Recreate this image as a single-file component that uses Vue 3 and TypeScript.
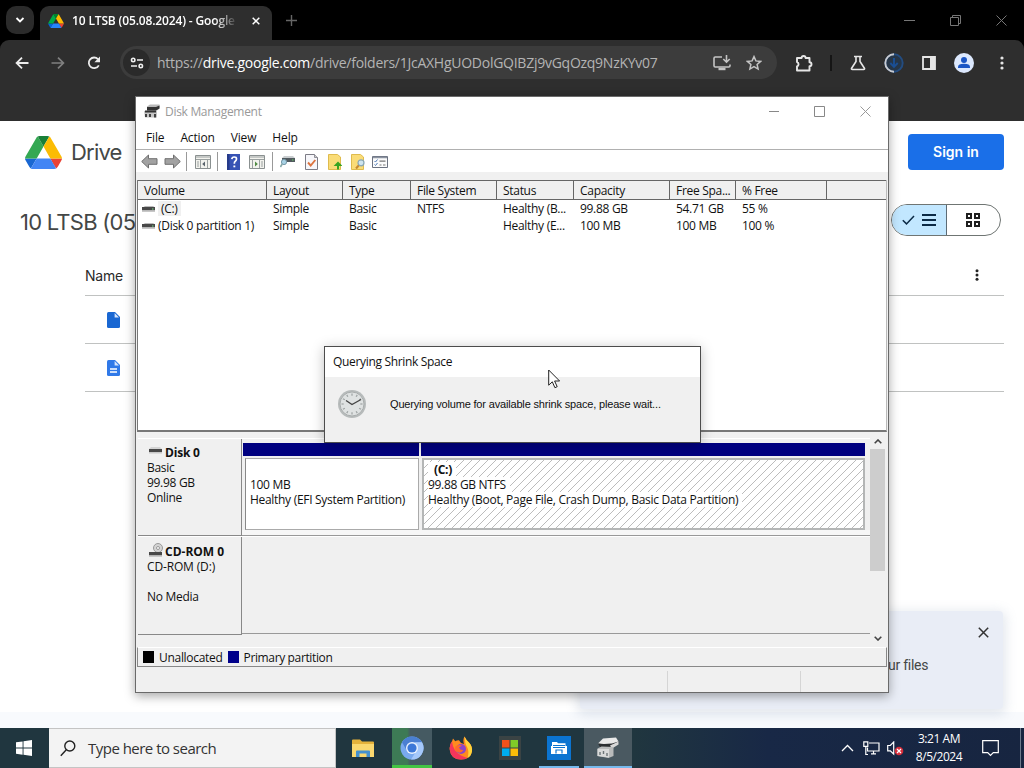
<script setup lang="ts">
interface Volume {
  name: string
  layout: string
  type: string
  fs: string
  status: string
  capacity: string
  free: string
  pct: string
}

const columns: string[] = ['Volume', 'Layout', 'Type', 'File System', 'Status', 'Capacity', 'Free Spa...', '% Free', '']

const volumes: Volume[] = [
  { name: '(C:)', layout: 'Simple', type: 'Basic', fs: 'NTFS', status: 'Healthy (B...', capacity: '99.88 GB', free: '54.71 GB', pct: '55 %' },
  { name: '(Disk 0 partition 1)', layout: 'Simple', type: 'Basic', fs: '', status: 'Healthy (E...', capacity: '100 MB', free: '100 MB', pct: '100 %' },
]

const menus: string[] = ['File', 'Action', 'View', 'Help']
const ticks: number[] = [0, 30, 60, 90, 120, 150, 180, 210, 240, 270, 300, 330]
</script>

<template>
  <div class="desktop">
    <div class="browser">
      <div class="tabstrip">
        <div class="tabsearch">
          <svg width="10" height="6" viewBox="0 0 10 6"><path d="M1.5 1l3.5 3.5L8.500 1" fill="none" stroke="#fff" stroke-width="1.8" /></svg>
        </div>
        <div class="tab">
          <svg class="fav" width="16" height="14" viewBox="0 0 87.3 78">
            <path d="M6.600 66.850l3.850 6.650c.8 1.400 1.950 2.500 3.300 3.300l13.750-23.800H0c0 1.550.4 3.100 1.200 4.500z" fill="#0066da" />
            <path d="M43.650 25L29.900 1.200c-1.350.8-2.500 1.900-3.300 3.300l-25.400 44A9 9 0 0 0 0 53h27.500z" fill="#00ac47" />
            <path d="M73.550 76.800c1.350-.8 2.500-1.900 3.300-3.300l1.600-2.750L86.100 57.500c.8-1.400 1.200-2.950 1.200-4.500H59.800l5.850 11.500z" fill="#ea4335" />
            <path d="M43.650 25L57.400 1.200C56.050.4 54.500 0 52.900 0H34.400c-1.600 0-3.150.45-4.500 1.200z" fill="#00832d" />
            <path d="M59.800 53H27.500L13.750 76.800c1.350.8 2.900 1.200 4.500 1.200h50.800c1.600 0 3.150-.45 4.500-1.200z" fill="#2684fc" />
            <path d="M73.400 26.500L60.700 4.500c-.8-1.400-1.950-2.500-3.300-3.300L43.650 25 59.800 53h27.450c0-1.550-.4-3.100-1.200-4.500z" fill="#ffba00" />
          </svg>
          <span class="tabtitle">10 LTSB (05.08.2024) - Google</span>
          <svg class="tabx" width="8" height="8" viewBox="0 0 8 8"><path d="M.7.7l6.600 6.600M7.300.7L.7 7.300" stroke="#fff" stroke-width="1.500" /></svg>
        </div>
        <svg class="newtab" width="11" height="11" viewBox="0 0 11 11"><path d="M5.500 0v11M0 5.500h11" stroke="#666" stroke-width="1.400" /></svg>
        <div class="winbtns">
          <svg width="11" height="11" viewBox="0 0 11 11"><path d="M0 5.500h11" stroke="#777" /></svg>
          <svg width="11" height="11" viewBox="0 0 11 11"><path d="M.5 2.500h8v8h-8zM2.500 2.500v-2h8v8h-2" fill="none" stroke="#777" /></svg>
          <svg width="11" height="11" viewBox="0 0 11 11"><path d="M.5.5l10 10M10.500.5l-10 10" stroke="#777" /></svg>
        </div>
      </div>

      <div class="toolbar">
        <svg class="back" width="14" height="12" viewBox="0 0 14 12"><path d="M13.500 6H1.500M7 .7L1.600 6 7 11.300" fill="none" stroke="#ececec" stroke-width="1.800" /></svg>
        <svg class="fwd" width="14" height="12" viewBox="0 0 14 12"><path d="M.5 6h12M7 .7L12.400 6 7 11.300" fill="none" stroke="#808080" stroke-width="1.700" /></svg>
        <svg class="reload" width="14" height="14" viewBox="0 0 14 14"><path d="M11.800 9.300A5.300 5.300 0 1 1 11 3.200" fill="none" stroke="#ececec" stroke-width="1.800" /><path d="M13 .6v5.600H7.400z" fill="#ececec" /></svg>
        <div class="omnibox">
          <div class="tune">
            <svg width="14" height="12" viewBox="0 0 14 12" fill="none" stroke="#f0f0f0" stroke-width="1.600"><circle cx="3.200" cy="3" r="1.700" /><path d="M7 3h6M1 9h6" /><circle cx="10.800" cy="9" r="1.700" /></svg>
          </div>
          <span class="url">https://<b>drive.google.com</b>/drive/folders/1JcAXHgUODolGQIBZj9vGqOzq9NzKYv07</span>
          <svg class="install" width="18" height="16" viewBox="0 0 18 16" fill="none" stroke="#c4c4c4" stroke-width="1.600"><path d="M9 2H2.200Q1 2 1 3.200v7.600Q1 12 2.200 12h13.600Q17 12 17 10.800V9.500" /><path d="M5.500 14h7" stroke-width="2.400" /><path d="M13.500 0v6.500M10.300 4l3.200 3.200L16.700 4" /></svg>
          <svg class="star" width="16" height="16" viewBox="0 0 16 16"><path d="M8 1.600l1.900 4.300 4.700.5-3.500 3.100 1 4.600L8 11.700l-4.100 2.400 1-4.600L1.400 6.400l4.700-.5z" fill="none" stroke="#c4c4c4" stroke-width="1.500" /></svg>
        </div>
        <div class="exts">
          <svg width="18" height="18" viewBox="0 0 18 18"><path d="M2 4h4.600a2 2 0 0 1 4 0H14.500v4.200a2 2 0 0 1 0 4V16.500H2v-4.200a2.200 2.200 0 0 0 0-4.200z" fill="none" stroke="#e6e6e6" stroke-width="1.900" stroke-linejoin="round" /></svg>
          <i class="sep"></i>
          <svg width="16" height="16" viewBox="0 0 16 16"><path d="M4 1.500h8M6 1.500v5L1.600 13.200q-.6 1.300.8 1.300h11.200q1.400 0 .8-1.300L10 6.500v-5" fill="none" stroke="#e6e6e6" stroke-width="1.600" /></svg>
          <svg width="20" height="20" viewBox="0 0 20 20"><circle cx="10" cy="10" r="8.700" fill="#263648" stroke="#234c80" stroke-width="1.900" /><path d="M10 1.300a8.700 8.700 0 1 0 0 17.400" fill="none" stroke="#c9cbd0" stroke-width="1.900" /><path d="M10 5v8.500M6.300 10l3.700 3.800 3.700-3.800" fill="none" stroke="#1b4f94" stroke-width="1.900" /></svg>
          <svg width="14" height="14" viewBox="0 0 14 14"><path d="M1 1h12v12H1z" fill="none" stroke="#e6e6e6" stroke-width="1.800" /><path d="M8 1h5v12H8z" fill="#e6e6e6" /></svg>
          <svg width="20" height="20" viewBox="0 0 20 20"><circle cx="10" cy="10" r="10" fill="#dce8fd" /><circle cx="10" cy="6.900" r="3" fill="#1a55c4" /><path d="M4 15v-1q0-3.200 6-3.200t6 3.200v1z" fill="#1a55c4" /></svg>
          <svg class="kebab" width="4" height="14" viewBox="0 0 4 14" fill="#e6e6e6"><circle cx="2" cy="2" r="1.600" /><circle cx="2" cy="7" r="1.600" /><circle cx="2" cy="12" r="1.600" /></svg>
        </div>
      </div>

      <div class="drive">
        <div class="drivehead">
          <svg width="37" height="33" viewBox="0 0 87.3 78">
            <path d="M6.600 66.850l3.850 6.650c.8 1.400 1.950 2.500 3.300 3.300l13.750-23.800H0c0 1.550.4 3.100 1.200 4.500z" fill="#1967d2" />
            <path d="M43.650 25L29.900 1.200c-1.350.8-2.500 1.900-3.300 3.300l-25.400 44A9 9 0 0 0 0 53h27.500z" fill="#34a853" />
            <path d="M73.550 76.800c1.350-.8 2.500-1.900 3.300-3.300l1.600-2.750L86.100 57.500c.8-1.400 1.200-2.950 1.200-4.500H59.800l5.850 11.500z" fill="#ea4335" />
            <path d="M43.650 25L57.400 1.200C56.050.4 54.500 0 52.900 0H34.400c-1.600 0-3.150.45-4.500 1.200z" fill="#188038" />
            <path d="M59.800 53H27.500L13.750 76.800c1.350.8 2.900 1.200 4.500 1.200h50.800c1.600 0 3.150-.45 4.500-1.200z" fill="#4285f4" />
            <path d="M73.400 26.500L60.700 4.500c-.8-1.400-1.950-2.500-3.300-3.300L43.650 25 59.800 53h27.450c0-1.550-.4-3.100-1.200-4.500z" fill="#fbbc04" />
          </svg>
          <span class="drivename">Drive</span>
          <button class="signin">Sign in</button>
        </div>
        <div class="folderrow">
          <span class="folder">10 LTSB (05</span>
          <div class="toggle">
            <div class="on">
              <svg width="13" height="10" viewBox="0 0 13 10"><path d="M.8 5.200l3.700 3.700L12 1" fill="none" stroke="#0b2a45" stroke-width="1.500" /></svg>
              <svg width="14" height="12" viewBox="0 0 14 12"><path d="M0 1h14M0 6h14M0 11h14" stroke="#0b2a45" stroke-width="2" /></svg>
            </div>
            <div class="off">
              <svg width="14" height="14" viewBox="0 0 14 14" fill="none" stroke="#1f1f1f" stroke-width="2"><path d="M1 1h4v4H1zM9 1h4v4H9zM1 9h4v4H1zM9 9h4v4H9z" /></svg>
            </div>
          </div>
        </div>
        <div class="files">
          <div class="fhead">
            <span>Name</span>
            <svg width="4" height="12" viewBox="0 0 4 12" fill="#222"><circle cx="2" cy="1.700" r="1.500" /><circle cx="2" cy="6" r="1.500" /><circle cx="2" cy="10.300" r="1.500" /></svg>
          </div>
          <div class="frow">
            <svg width="13" height="16" viewBox="0 0 13 16"><path d="M1.500 0H8l5 5v9.500q0 1.500-1.500 1.500h-10Q0 16 0 14.500v-13Q0 0 1.500 0z" fill="#1967d2" /><path d="M7.600 1v4.400H12z" fill="#d7e6fc" /></svg>
          </div>
          <div class="frow">
            <svg width="13" height="16" viewBox="0 0 13 16"><path d="M1.500 0H8l5 5v9.500q0 1.500-1.500 1.500h-10Q0 16 0 14.500v-13Q0 0 1.500 0z" fill="#3079e8" /><path d="M7.600 1v4.400H12z" fill="#d7e6fc" /><path d="M3 9h7M3 12h7" stroke="#fff" stroke-width="1.500" /></svg>
          </div>
        </div>
        <div class="toast">
          <span>ur files</span>
          <svg width="11" height="11" viewBox="0 0 11 11"><path d="M.8.8l9.400 9.400M10.200.8L.8 10.200" stroke="#333" stroke-width="1.500" /></svg>
        </div>
        <div class="pagefoot"></div>
      </div>
    </div>

    <div class="dm">
      <div class="dmtitle">
        <svg width="16" height="15" viewBox="0 0 16 15"><path d="M3 2.500L6 .5h9.500v4L13 6.500H3z" fill="#b9b9b9" /><path d="M3 3h9l3.500-1.500v3L12 6.500H3z" fill="#333" /><path d="M0 7h13v6.500H1z" fill="#c6c6c6" /><path d="M1 7.500h11M2 10v3M6 10v3M11 10v3.500" stroke="#333" stroke-width="1.800" /></svg>
        <span>Disk Management</span>
        <div class="dmbtns">
          <svg width="11" height="11" viewBox="0 0 11 11"><path d="M1 5.500h10" stroke="#888" /></svg>
          <svg width="11" height="11" viewBox="0 0 11 11"><path d="M.5.5h10v10H.5z" fill="none" stroke="#888" /></svg>
          <svg width="11" height="11" viewBox="0 0 11 11"><path d="M.5.5l10 10M10.500.5l-10 10" stroke="#999" /></svg>
        </div>
      </div>
      <div class="menubar"><span v-for="m in menus" :key="m">{{ m }}</span></div>
      <div class="tools">
        <svg width="17" height="15" viewBox="0 0 17 15"><path d="M.7 7.500L7.500 1v3.700H16v5.600H7.500V14z" fill="#a2a2a2" stroke="#6f6f6f" /></svg>
        <svg class="g6" width="17" height="15" viewBox="0 0 17 15"><path d="M16.300 7.500L9.500 1v3.700H1v5.600h8.500V14z" fill="#a2a2a2" stroke="#6f6f6f" /></svg>
        <i class="tsep g5"></i>
        <svg class="g8" width="16" height="14" viewBox="0 0 16 14"><path d="M.5.500h15v13H.5z" fill="#f3f3ee" stroke="#8a9090" /><path d="M1 2h14M1 4.500h14" stroke="#9aa0a0" stroke-width="1.200" /><path d="M5.500 5v8M2 7h2M2 9h2M2 11h2M12.500 5v8" stroke="#9aa0a0" /><path d="M10 6.500v5L7.200 9z" fill="#59636b" /></svg>
        <i class="tsep g6"></i>
        <svg class="g9" width="13" height="16" viewBox="0 0 13 16"><path d="M0 0h13v16H0z" fill="#3753b4" /><path d="M0 0h2.500v16H0z" fill="#263b8a" /><path d="M4.800 5.200Q5 3 7.300 3t2.200 2q0 1.300-1.200 2.200Q7.300 8 7.300 9.800" fill="none" stroke="#fff" stroke-width="1.700" /><path d="M6.400 11.500h1.900v1.800H6.400z" fill="#fff" /></svg>
        <svg class="g9" width="16" height="14" viewBox="0 0 16 14"><path d="M.5.500h15v13H.5z" fill="#f3f3ee" stroke="#8a9090" /><path d="M1 2h14M1 4.500h14" stroke="#9aa0a0" stroke-width="1.200" /><path d="M10.500 5v8M12 7h2M12 9h2M12 11h2M3.500 5v8" stroke="#9aa0a0" /><path d="M6 6.500v5L8.800 9z" fill="#4f8a42" /></svg>
        <i class="tsep g7"></i>
        <svg class="g7" width="15" height="13" viewBox="0 0 15 13"><path d="M2 3l2-2h9l2 2z" fill="#c9cdcf" /><path d="M2 3h13v4H2z" fill="#515a5f" /><path d="M12 5h1.500" stroke="#6c6" stroke-width="1.200" /><circle cx="4" cy="7" r="2.600" fill="#a9d3e6" stroke="#7699a8" /><path d="M2.200 9L.4 12" stroke="#8aa" stroke-width="1.600" /></svg>
        <svg class="g10" width="13" height="16" viewBox="0 0 13 16"><path d="M.5.500h9l3 3v12H.5z" fill="#f6f6fa" stroke="#7c7c86" /><path d="M9.500.5v3h3" fill="#ccc" stroke="#7c7c86" stroke-width=".8" /><path d="M3 8.500l2.700 3L10.300 6" fill="none" stroke="#dc7440" stroke-width="1.900" /></svg>
        <svg class="g10" width="14" height="16" viewBox="0 0 14 16"><path d="M.5.500h9L12.500 3v12.500H.5z" fill="#fadc77" stroke="#dfbb4d" /><path d="M10 15.500V10M8 11L10 9l2 2z" fill="#39a422" stroke="#39a422" stroke-width="2" /></svg>
        <svg class="g9" width="15" height="16" viewBox="0 0 15 16"><path d="M.5.500h9L12.500 3v12.500H.5z" fill="#fadc77" stroke="#dfbb4d" /><path d="M8.500 10.500L5 14.500" stroke="#c88a31" stroke-width="2" /><circle cx="10" cy="8.800" r="3" fill="#cfe5ef" stroke="#89a7b5" stroke-width="1.200" /></svg>
        <svg class="g6" width="16" height="12" viewBox="0 0 16 12"><path d="M.5.500h15v11H.5z" fill="#fbfbfb" stroke="#6b7280" /><path d="M1 1.500h14" stroke="#8b93a0" stroke-width="1.500" /><path d="M2.500 5l1 1 2-2.500M2.500 8.500l1 1 2-2.500" stroke="#4d7ab8" fill="none" /><path d="M7.500 5.200h6M7.500 9h2M11 9h2.500" stroke="#777" stroke-width="1.200" /></svg>
      </div>
      <div class="band"></div>

      <div class="list">
        <div class="lrow lhead"><span v-for="(c, i) in columns" :key="i">{{ c }}</span></div>
        <div v-for="(v, i) in volumes" :key="v.name" class="lrow">
          <span class="vol">
            <svg width="13" height="6" viewBox="0 0 13 6"><path d="M1.500 1L3 0h8l1.500 1z" fill="#bbb" /><path d="M0 1h13v3.500H0z" fill="#484848" /><path d="M0 4.500h13V6H0z" fill="#c8c8c8" /><path d="M10 3h1.500" stroke="#7d8" /></svg>
            <em :class="{ sel: i === 0 }">{{ v.name }}</em>
          </span>
          <span>{{ v.layout }}</span>
          <span>{{ v.type }}</span>
          <span>{{ v.fs }}</span>
          <span>{{ v.status }}</span>
          <span>{{ v.capacity }}</span>
          <span>{{ v.free }}</span>
          <span>{{ v.pct }}</span>
        </div>
      </div>

      <div class="lower">
        <div class="disks">
          <div class="disk">
            <div class="dinfo">
              <b><svg width="13" height="8" viewBox="0 0 13 8"><path d="M0 2l2-2h9l2 2z" fill="#d4d4d4" /><path d="M0 2h13v3H0z" fill="#484848" /><path d="M0 5h13v1.500H0z" fill="#c8c8c8" /></svg>Disk 0</b>
              <span>Basic</span><span>99.98 GB</span><span>Online</span>
            </div>
            <div class="parts">
              <div class="part p1">
                <div class="bar"></div>
                <div class="box"><span>&nbsp;</span><span>100 MB</span><span>Healthy (EFI System Partition)</span></div>
              </div>
              <div class="part p2">
                <div class="bar"></div>
                <div class="box hatched">
                  <b>(C:)</b><span>99.88 GB NTFS</span><span class="long">Healthy (Boot, Page File, Crash Dump, Basic Data Partition)</span>
                </div>
              </div>
            </div>
          </div>
          <div class="disk cd">
            <div class="dinfo">
              <b><svg width="14" height="14" viewBox="0 0 14 14"><circle cx="9" cy="5" r="4.500" fill="#d4d4d4" stroke="#999" /><circle cx="9" cy="5" r="1.500" fill="#fff" stroke="#999" /><path d="M0 9h13v3.500H0z" fill="#484848" /><path d="M0 12.500h13V14H0z" fill="#c8c8c8" /></svg>CD-ROM 0</b>
              <span class="cdname">CD-ROM (D:)</span><span>&nbsp;</span><span>No Media</span>
            </div>
            <div class="empty"></div>
          </div>
        </div>
        <div class="scroll">
          <svg width="8" height="5" viewBox="0 0 8 5"><path d="M.7 4.300L4 1l3.300 3.300" fill="none" stroke="#444" stroke-width="1.600" /></svg>
          <div class="thumb"></div>
          <svg width="8" height="5" viewBox="0 0 8 5"><path d="M.7.7L4 4 7.300.7" fill="none" stroke="#444" stroke-width="1.600" /></svg>
        </div>
      </div>
      <div class="legend">
        <i class="sw black"></i><span>Unallocated</span><i class="sw navy"></i><span class="pp">Primary partition</span>
      </div>
      <div class="status"><div></div><div></div><div></div></div>
    </div>

    <div class="dialog">
      <div class="dtitle">Querying Shrink Space</div>
      <div class="dbody">
        <svg width="30" height="30" viewBox="0 0 30 30">
          <circle cx="15" cy="15" r="14" fill="#b7bbbb" />
          <circle cx="15" cy="15" r="12" fill="#dfe2e2" stroke="#a9adad" />
          <path v-for="t in ticks" :key="t" d="M15 4.500v2.200" stroke="#9da2a2" stroke-width="1.200" :transform="`rotate(${t} 15 15)`" />
          <path d="M9 11.500l6 4 9-5" fill="none" stroke="#444" stroke-width="1.400" />
        </svg>
        <span>Querying volume for available shrink space, please wait...</span>
      </div>
    </div>

    <svg class="cursor" width="13" height="20" viewBox="0 0 13 20"><path d="M.7 1v15.200l3.600-3.400 2.600 5.900 2.300-1-2.600-5.700h5z" fill="#fff" stroke="#222" /></svg>

    <div class="taskbar">
      <div class="start">
        <svg width="16" height="16" viewBox="0 0 16 16" fill="#fff"><path d="M0 2.300L6.600 1.400v6.200H0zM7.500 1.200L16 0v7.600H7.500zM0 8.500h6.600v6.200L0 13.700zM7.500 8.500H16V16l-8.500-1.200z" /></svg>
      </div>
      <div class="search">
        <svg width="16" height="17" viewBox="0 0 16 17"><circle cx="9.800" cy="6" r="5" fill="none" stroke="#222" stroke-width="1.400" /><path d="M6.300 9.700L.8 15.800" stroke="#222" stroke-width="1.400" /></svg>
        <span>Type here to search</span>
      </div>
      <div class="apps">
        <div class="app">
          <svg width="22" height="19" viewBox="0 0 22 19"><path d="M0 1.500Q0 .5 1 .5h7l2 2h11q1 0 1 1V18H0z" fill="#e5b23b" /><path d="M0 5h22v13H0z" fill="#fbd86f" /><path d="M4 18v-5.500q0-1 1-1h12q1 0 1 1V18h-3.500v-3.500h-7V18z" fill="#4591cf" /></svg>
        </div>
        <div class="app chromium">
          <svg width="24" height="24" viewBox="0 0 24 24"><circle cx="12" cy="12" r="11.500" fill="#78a9ee" /><path d="M12 .5a11.500 11.500 0 0 1 10 5.800H12L6.500 14 2 6.300A11.500 11.500 0 0 1 12 .5z" fill="#4a7fd2" /><path d="M22 6.300A11.500 11.500 0 0 1 11 23.500L17 14l-2-7.700z" fill="#a5c8fa" /><circle cx="12" cy="12" r="6" fill="#eaf2fd" /><circle cx="12" cy="12" r="4.600" fill="#3c78d8" /></svg>
        </div>
        <div class="app fx">
          <svg width="24" height="24" viewBox="0 0 24 24"><path d="M3 5.500l1-3 2.300 2.800Q8 4 10 4.200L12 7l3 1Q13.500 4 15.500.5 17 4 20 6.500q3.500 4 3 8.500-1 8.500-11 8.500T.8 14Q.3 9 3 5.500z" fill="#ff8a1f" /><path d="M15.500.5Q17 4 20 6.500q3.500 4 3 8.500-.6 5-4.500 7 2-7-.5-11-2-3-2.500-10.500z" fill="#ffd43b" /><path d="M.8 14Q.3 9 3 5.500 4 15 12 19.500q4 1.500 6.500 2.500-3 1.500-6.500 1.500Q2 23.500.8 14z" fill="#f5355b" /><circle cx="12" cy="13" r="5" fill="#8d46c8" /><path d="M6.500 10.500Q9 8 13 9.500l-3 2q1 3 4.500 2.500Q12 18 8.500 16T6.500 10.500z" fill="#ff6a2b" /></svg>
        </div>
        <div class="app ms">
          <svg width="22" height="24" viewBox="0 0 22 24"><path d="M0 0h22v24H0z" fill="#3a4344" /><path d="M3 4h7.500v7.500H3z" fill="#f1511b" /><path d="M11.500 4H19v7.500h-7.500z" fill="#80cc28" /><path d="M3 12.500h7.500V20H3z" fill="#00adef" /><path d="M11.500 12.500H19V20h-7.500z" fill="#fbbc09" /></svg>
        </div>
        <div class="app blue">
          <svg width="24" height="24" viewBox="0 0 24 24"><path d="M0 0h24v24H0z" fill="#0b74d1" /><path d="M5 6h5l1 1.300h7.500V10H20v8H4v-8h1z" fill="#fff" /><path d="M6 9.500h12M6 11.500h12M9 17.500v-3.500h6v3.500" fill="none" stroke="#0b74d1" stroke-width="1.200" /></svg>
        </div>
        <div class="app active">
          <svg width="24" height="22" viewBox="0 0 24 22"><path d="M2 6.500L7 1.500 20 .5l2.500 4-6 4z" fill="#e9e9e9" /><path d="M2 6.500l6 .5 8-.5 6.500-2v1.500l-6.500 4.500-12-.5z" fill="#2c2f31" /><path d="M14 8.500l8.500-4v3L16 11.500z" fill="#d8d8d8" /><path d="M1.500 11.500l4-2 12 .5v9l-5 2-11-2z" fill="#b9bbbb" /><path d="M1.500 12H13v8.500L1.500 19z" fill="#d9dada" /><path d="M4 15v3M7.500 14v3M11 16v3" stroke="#6c7477" stroke-width="1.400" /></svg>
        </div>
      </div>
      <div class="tray">
        <svg width="13" height="8" viewBox="0 0 13 8"><path d="M1 7l5.500-5.500L12 7" fill="none" stroke="#fff" stroke-width="1.300" /></svg>
        <svg class="net" width="17" height="14" viewBox="0 0 17 14" fill="none" stroke="#fff" stroke-width="1.200"><path d="M6 2h10v8H4.500V6.500M8 12.800h5M10.500 10v3" /><path d="M.8.800h4v4.500h-4zM2.800 5.500v8H5" /></svg>
        <svg class="vol2" width="17" height="15" viewBox="0 0 17 15"><path d="M.7 4.500h2.600L6.700 1v12L3.300 9.800H.7z" fill="none" stroke="#fff" stroke-width="1.200" /><circle cx="12" cy="10" r="4.300" fill="#d62e3b" /><path d="M10 8l4 4M14 8l-4 4" stroke="#fff" stroke-width="1.200" /></svg>
        <div class="clock"><span>3:21 AM</span><span>8/5/2024</span></div>
        <svg class="notif" width="17" height="17" viewBox="0 0 17 17"><path d="M.7.700h15.600v12h-5L8.500 15.500 5.700 12.700h-5z" fill="none" stroke="#fff" stroke-width="1.200" /></svg>
        <i class="peek"></i>
      </div>
    </div>
  </div>
</template>

<style>
html,
body {
  margin: 0;
  overflow: hidden;
}
</style>

<style scoped>
* {
  box-sizing: border-box;
}
svg {
  display: block;
  flex: none;
}
.desktop {
  position: relative;
  width: 1024px;
  height: 768px;
  overflow: hidden;
  display: flex;
  flex-direction: column;
  font-family: "Open Sans", "Noto Sans", sans-serif;
  font-size: 12px;
  white-space: nowrap;
  color: #111;
}
.browser {
  height: 728px;
  display: flex;
  flex-direction: column;
  background: #000;
}
.tabstrip {
  height: 40px;
  flex: none;
  display: flex;
  padding: 6px 17px 0 6px;
}
.tabsearch {
  width: 28px;
  height: 28px;
  border-radius: 10px;
  background: #2b2b2b;
  display: flex;
  align-items: center;
  justify-content: center;
}
.tab {
  width: 232px;
  height: 34px;
  margin-left: 6px;
  border-radius: 9px 9px 0 0;
  background: #2e2e2e;
  display: flex;
  align-items: center;
  padding: 0 12px 5px 8px;
}
.tabtitle {
  width: 166px;
  margin-left: 8px;
  overflow: hidden;
  color: #fff;
  font-weight: 600;
  font-size: 12px;
  letter-spacing: -0.15px;
  mask-image: linear-gradient(90deg, #000 86%, transparent);
}
.tabx {
  margin-left: auto;
}
.newtab {
  margin: 9px 0 0 14px;
}
.winbtns {
  display: flex;
  gap: 35px;
  margin: 9px 0 0 auto;
}
.toolbar {
  height: 81px;
  flex: none;
  background: #2e2e2e;
  border-radius: 9px 9px 0 0;
  display: flex;
  align-items: flex-start;
  padding: 6px 20px 0 15px;
}
.back,
.fwd {
  margin-top: 11px;
}
.fwd {
  margin-left: 22px;
}
.reload {
  margin: 10px 0 0 22px;
}
.omnibox {
  width: 657px;
  height: 33px;
  margin-left: 19px;
  border-radius: 17px;
  background: #3c3c3c;
  display: flex;
  align-items: center;
  padding: 0 15px 0 3px;
}
.tune {
  width: 27px;
  height: 27px;
  border-radius: 50%;
  background: #2a2a2a;
  display: flex;
  align-items: center;
  justify-content: center;
}
.url {
  margin-left: 7px;
  font-size: 14px;
  letter-spacing: -0.26px;
  color: #b4b4b4;
}
.url b {
  font-weight: 400;
  color: #fff;
}
.install {
  margin-left: auto;
}
.star {
  margin-left: 15px;
}
.exts {
  flex: 1;
  height: 34px;
  margin-left: 18px;
  display: flex;
  align-items: center;
  gap: 18px;
}
.kebab {
  margin-left: auto;
}
.sep {
  width: 2px;
  height: 16px;
  margin-left: -1px;
  background: #151515;
}
.drive {
  position: relative;
  flex: 1;
  background: #fff;
  color: #444746;
  font-family: Roboto, "Open Sans", sans-serif;
  display: flex;
  flex-direction: column;
}
.drivehead {
  display: flex;
  align-items: center;
  height: 62px;
  padding: 0 20px 0 25px;
}
.drivename {
  margin-left: 9px;
  font-family: Inter, sans-serif;
  font-size: 22px;
  letter-spacing: -0.8px;
}
.signin {
  margin-left: auto;
  width: 96px;
  height: 36px;
  border: 0;
  border-radius: 4px;
  padding: 0 0 2px;
  background: #1a6fe8;
  color: #fff;
  font: 600 14px Inter, sans-serif;
  letter-spacing: 0;
}
.folderrow {
  display: flex;
  align-items: center;
  justify-content: space-between;
  height: 32px;
  margin-top: 21px;
  padding: 0 23px 0 20px;
}
.folder {
  padding-top: 3px;
  font-family: Inter, sans-serif;
  font-size: 22px;
  letter-spacing: -0.75px;
}
.toggle {
  width: 110px;
  height: 32px;
  border: 1px solid #6f7573;
  border-radius: 16px;
  overflow: hidden;
  display: flex;
}
.on {
  width: 55px;
  border-right: 1px solid #5d6b75;
  background: #c2e7ff;
  display: flex;
  align-items: center;
  justify-content: center;
  gap: 7px;
}
.off {
  flex: 1;
  display: flex;
  align-items: center;
  justify-content: center;
  padding-right: 2px;
}
.files {
  width: 919px;
  margin: 20px 0 0 85px;
}
.fhead {
  height: 40px;
  border-bottom: 1px solid #c0c2c1;
  display: flex;
  align-items: center;
  justify-content: space-between;
  padding: 0 25px 1px 0;
  font-family: Inter, sans-serif;
  font-size: 14px;
  letter-spacing: -0.2px;
  color: #2a2a2a;
}
.frow {
  height: 48px;
  border-bottom: 1px solid #c0c2c1;
  display: flex;
  align-items: center;
  padding-left: 22px;
}
.toast {
  position: absolute;
  left: 580px;
  top: 490px;
  width: 423px;
  height: 98px;
  background: #e9edf6;
  border-radius: 4px;
  box-shadow: 0 3px 12px 3px rgba(120, 140, 170, 0.2);
  display: flex;
  justify-content: flex-end;
  font-size: 14px;
  letter-spacing: -0.25px;
}
.toast span {
  margin: 46px 51px 0 0;
  width: 39px;
}
.toast svg {
  margin: 16px 14px 0 0;
}
.pagefoot {
  height: 16px;
  margin-top: auto;
  background: #f8fafd;
}

.dm {
  position: absolute;
  left: 135px;
  top: 96px;
  width: 754px;
  height: 597px;
  border: 1px solid #6a6a6a;
  background: #f0f0f0;
  box-shadow: 0 3px 10px rgba(0, 0, 0, 0.35);
  display: flex;
  flex-direction: column;
  letter-spacing: -0.3px;
}
.dmtitle {
  height: 31px;
  background: #fff;
  display: flex;
  align-items: center;
  padding: 0 17px 3px 8px;
  color: #999;
}
.dmtitle span {
  margin-left: 5px;
}
.dmbtns {
  margin-left: auto;
  display: flex;
  gap: 35px;
}
.menubar {
  height: 22px;
  background: #fff;
  border-bottom: 1px solid #b0b0b0;
  display: flex;
  align-items: center;
  padding: 0 0 2px 10px;
  gap: 16px;
  letter-spacing: -0.15px;
}
.tools {
  height: 22px;
  background: #fff;
  display: flex;
  align-items: center;
  padding: 1px 0 0 5px;
}
.g5 {
  margin-left: 5px;
}
.g6 {
  margin-left: 6px;
}
.g7 {
  margin-left: 7px;
}
.g8 {
  margin-left: 8px;
}
.g9 {
  margin-left: 9px;
}
.g10 {
  margin-left: 10px;
}
.tsep {
  width: 1px;
  height: 19px;
  background: #999;
}
.band {
  height: 8px;
}
.list {
  height: 252px;
  margin: 0 1px;
  border-left: 1px solid #777;
  border-right: 1px solid #bbb;
  border-bottom: 2px solid #777;
  background: #fff;
}
.lrow {
  display: grid;
  grid-template-columns: 129px 76px 68px 86px 77px 96px 66px 91px 1fr;
  height: 17px;
  align-items: center;
}
.lrow > span {
  padding-left: 6px;
}
.lhead {
  height: 20px;
  border-top: 1px solid #666;
  border-bottom: 1px solid #666;
  background: #f0f0f0;
  align-items: stretch;
  line-height: 19px;
}
.lhead > span {
  border-right: 1px solid #666;
}
.lhead > span:last-child {
  border: 0;
}
.lrow > .vol {
  display: flex;
  align-items: center;
  padding-left: 4px;
}
.vol em {
  font-style: normal;
  margin-left: 3px;
}
.vol .sel {
  margin-left: 3px;
  padding: 0 3px;
  background: #f0f0f0;
  line-height: 15px;
}
.lower {
  height: 215px;
  display: flex;
  margin: 0 2px;
}
.disks {
  width: 732px;
  padding-top: 6px;
}
.disk {
  height: 98px;
  display: flex;
  border-top: 1px solid #fff;
}
.dinfo {
  width: 104px;
  border-right: 1px solid #888;
  border-bottom: 1px solid #888;
  display: flex;
  flex-direction: column;
  padding: 6px 0 0 9px;
  line-height: 15px;
}
.dinfo b {
  display: flex;
  align-items: center;
  gap: 3px;
  margin-left: 2px;
  letter-spacing: -0.2px;
}
.dinfo b svg {
  margin-top: -4px;
}
.parts {
  flex: 1;
  display: flex;
  gap: 2px;
  padding: 4px 0 0 1px;
  border-bottom: 1px solid #999;
  box-shadow: inset 0 -5px 0 #f7f7f7;
}
.part {
  height: 87px;
  display: flex;
  flex-direction: column;
}
.p1 {
  width: 176px;
}
.p2 {
  width: 444px;
}
.bar {
  height: 13px;
  background: #00007f;
}
.box {
  flex: 1;
  margin: 2px 0 0 2px;
  border: 1px solid #aaa;
  border-left-color: #888;
  background: #fff;
  display: flex;
  flex-direction: column;
  align-items: flex-start;
  padding: 3px 0 0 4px;
  line-height: 15px;
}
.hatched {
  margin-left: 1px;
  border: 2px solid #b4b6b6;
  padding: 2px 0 0 4px;
  background: repeating-linear-gradient(135deg, #fff 0 5px, #bcbcbc 5px 5.66px);
}
.hatched b {
  padding: 0 4px 0 6px;
  background: #fff;
}
.hatched span {
  background: #fff;
  padding-right: 4px;
}
.long {
  letter-spacing: -0.28px;
}
.cd {
  height: 99px;
}
.cd .dinfo {
  padding-top: 7px;
}
.cd .dinfo b {
  gap: 2px;
  letter-spacing: 0;
}
.cdname {
  letter-spacing: -0.15px;
}
.empty {
  flex: 1;
  border-bottom: 1px solid #999;
  margin-bottom: 1px;
}
.scroll {
  width: 15px;
  display: flex;
  flex-direction: column;
  align-items: center;
  padding-top: 7px;
}
.thumb {
  width: 15px;
  height: 122px;
  margin: 5px 0 65px;
  background: #cdcdcd;
}
.legend {
  height: 20px;
  margin: 0 1px;
  border-left: 1px solid #888;
  border-right: 1px solid #888;
  border-bottom: 1px solid #888;
  border-top: 1px solid #fff;
  display: flex;
  align-items: center;
  padding-left: 5px;
}
.sw {
  width: 11px;
  height: 12px;
  margin-right: 5px;
}
.black {
  background: #000;
}
.navy {
  background: #00008b;
  margin-left: 5px;
}
.pp {
  letter-spacing: -0.36px;
}
.status {
  flex: 1;
  display: grid;
  grid-template-columns: 532px 133px 1fr;
  padding-top: 4px;
}
.status div {
  border-right: 1px solid #d5d5d5;
}
.status div:last-child {
  border: 0;
}

.dialog {
  position: absolute;
  left: 324px;
  top: 346px;
  width: 377px;
  height: 97px;
  border: 1px solid #4c4c4c;
  background: #f0f0f0;
  box-shadow: 0 2px 12px rgba(0, 0, 0, 0.25);
}
.dtitle {
  height: 30px;
  line-height: 30px;
  padding-left: 8px;
  background: #fff;
  letter-spacing: -0.33px;
}
.dbody {
  display: flex;
  align-items: center;
  height: 54px;
  padding-left: 12px;
}
.dbody span {
  margin-left: 23px;
  font-family: "Liberation Sans", Arial, sans-serif;
  font-size: 11px;
  letter-spacing: -0.17px;
}
.cursor {
  position: absolute;
  left: 548px;
  top: 369px;
}

.taskbar {
  height: 40px;
  display: flex;
  background: linear-gradient(90deg, #20363f 0, #20363f 62%, #182846 75%, #172540 100%);
}
.start {
  width: 49px;
  padding-right: 2px;
  display: flex;
  align-items: center;
  justify-content: center;
}
.search {
  width: 287px;
  border: 1px solid #c4c4c4;
  border-left: 0;
  background: #f3f3f3;
  display: flex;
  align-items: center;
  padding-left: 11px;
  font-size: 15px;
  letter-spacing: -0.52px;
  color: #333;
}
.search span {
  margin-left: 12px;
}
.apps {
  display: flex;
  margin-left: 3px;
}
.app {
  width: 48px;
  display: flex;
  align-items: center;
  justify-content: center;
}
.chromium {
  width: 40px;
  margin-left: 5px;
  border-bottom: 3px solid #43c443;
  padding-top: 3px;
  background: linear-gradient(90deg, #3d7a55 0 38%, #455a62 46%);
}
.fx {
  margin-left: 5px;
}
.ms {
  margin-left: 1px;
}
.blue {
  width: 40px;
  margin-left: 5px;
  border-bottom: 2px solid #76b9ed;
  padding-top: 2px;
}
.active {
  margin-left: 5px;
  background: #4a5961;
  border-bottom: 2px solid #76b9ed;
  padding-top: 2px;
}
.tray {
  margin-left: auto;
  display: flex;
  align-items: center;
}
.net {
  margin-left: 9px;
}
.vol2 {
  margin-left: 7px;
}
.clock {
  width: 60px;
  margin-left: 5px;
  display: flex;
  flex-direction: column;
  align-items: center;
  line-height: 18px;
  color: #fff;
  letter-spacing: -0.45px;
}
.notif {
  margin-left: 13px;
}
.peek {
  width: 1px;
  height: 40px;
  margin: 0 3px 0 21px;
  background: #6d7a8c;
}
</style>
